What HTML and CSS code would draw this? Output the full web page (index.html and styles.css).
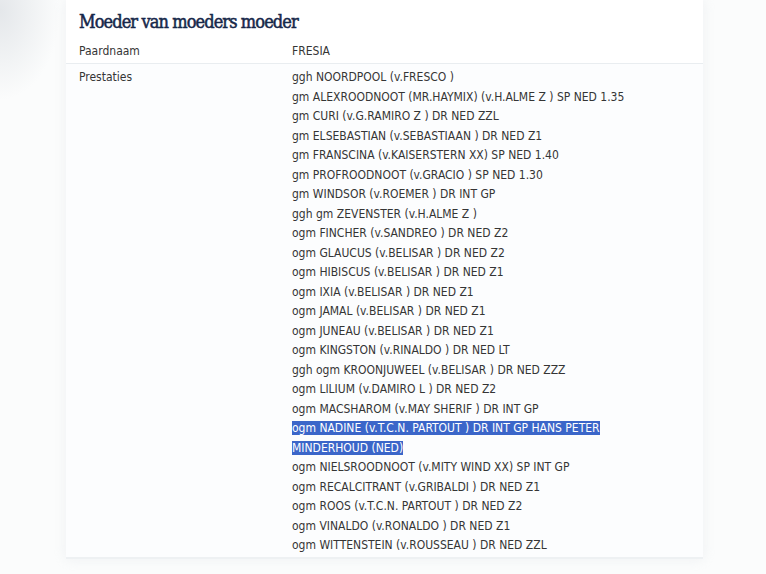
FILE: index.html
```html
<!DOCTYPE html>
<html lang="nl">

<head>
  <meta charset="UTF-8" />
  <title>Moeder van moeders moeder</title>
  <link rel="stylesheet" href="styles.css">
</head>

<body>
  <div class="card">
    <h2 class="title">Moeder van moeders moeder</h2>
    <div class="row first">
      <div class="label">Paardnaam</div>
      <div class="value">FRESIA</div>
    </div>
    <div class="row last">
      <div class="label">Prestaties</div>
      <div class="value">
        <div>ggh NOORDPOOL (v.FRESCO )</div>
        <div>gm ALEXROODNOOT (MR.HAYMIX) (v.H.ALME Z ) SP NED 1.35</div>
        <div>gm CURI (v.G.RAMIRO Z ) DR NED ZZL</div>
        <div>gm ELSEBASTIAN (v.SEBASTIAAN ) DR NED Z1</div>
        <div>gm FRANSCINA (v.KAISERSTERN XX) SP NED 1.40</div>
        <div>gm PROFROODNOOT (v.GRACIO ) SP NED 1.30</div>
        <div>gm WINDSOR (v.ROEMER ) DR INT GP</div>
        <div>ggh gm ZEVENSTER (v.H.ALME Z )</div>
        <div>ogm FINCHER (v.SANDREO ) DR NED Z2</div>
        <div>ogm GLAUCUS (v.BELISAR ) DR NED Z2</div>
        <div>ogm HIBISCUS (v.BELISAR ) DR NED Z1</div>
        <div>ogm IXIA (v.BELISAR ) DR NED Z1</div>
        <div>ogm JAMAL (v.BELISAR ) DR NED Z1</div>
        <div>ogm JUNEAU (v.BELISAR ) DR NED Z1</div>
        <div>ogm KINGSTON (v.RINALDO ) DR NED LT</div>
        <div>ggh ogm KROONJUWEEL (v.BELISAR ) DR NED ZZZ</div>
        <div>ogm LILIUM (v.DAMIRO L ) DR NED Z2</div>
        <div>ogm MACSHAROM (v.MAY SHERIF ) DR INT GP</div>
        <div><span class="selected">ogm NADINE (v.T.C.N. PARTOUT ) DR INT GP HANS PETER MINDERHOUD (NED)</span></div>
        <div>ogm NIELSROODNOOT (v.MITY WIND XX) SP INT GP</div>
        <div>ogm RECALCITRANT (v.GRIBALDI ) DR NED Z1</div>
        <div>ogm ROOS (v.T.C.N. PARTOUT ) DR NED Z2</div>
        <div>ogm VINALDO (v.RONALDO ) DR NED Z1</div>
        <div>ogm WITTENSTEIN (v.ROUSSEAU ) DR NED ZZL</div>
      </div>
    </div>
  </div>
</body>

</html>
```

FILE: styles.css
```css
body {
  margin: 0;
  height: 574px;
  overflow: hidden;
  background: radial-gradient(ellipse 60px 90px at 0 10px, #e4e7ea, rgba(240, 242, 244, 0) 100%), #fbfcfc;
  font-family: "DejaVu Sans Condensed", "DejaVu Sans", sans-serif;
  font-stretch: condensed;
  font-size: 12px;
  color: #353535;
}

.card {
  margin-left: 66px;
  width: 637px;
  background: #fff;
  box-shadow: 0 0 12px rgba(230, 233, 236, 0.6);
}

.title {
  margin: 0;
  padding: 10px 13px 5px;
  font-family: "DejaVu Serif Condensed", "DejaVu Serif", serif;
  font-stretch: condensed;
  font-weight: normal;
  font-size: 18px;
  letter-spacing: -0.9px;
  line-height: 24px;
  color: #17284a;
  -webkit-text-stroke: 0.5px #17284a;
}

.row {
  display: grid;
  grid-template-columns: 213px 1fr;
  line-height: 19.5px;
}

.row.first {
  padding: 3px 0 1.5px;
  border-bottom: 1px solid #e9edf0;
}

.row.last {
  padding: 4px 0 1.5px;
  background: #fcfdfe;
  border-bottom: 2px solid #eef1f3;
}

.label,
.value {
  padding: 0 13px;
}

.value {
  padding-right: 40px;
}

.selected {
  background: #3b66c9;
  color: #fff;
}
```
